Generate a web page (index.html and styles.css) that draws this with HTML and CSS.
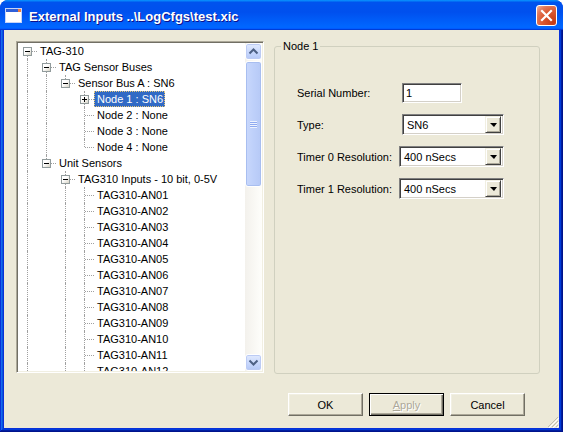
FILE: index.html
```html
<!DOCTYPE html>
<html lang="en">
<head>
    <meta charset="UTF-8">
    <title>External Inputs</title>
    <link rel="stylesheet" href="styles.css">
</head>
<body>
<div class="window">
    <div class="titlebar">
        <svg class="app-icon" width="17" height="15" viewBox="0 0 17 15">
            <rect x="0.5" y="0.5" width="16" height="14" fill="#fff" stroke="#c6d3f7"/>
            <rect x="1" y="1" width="15" height="3" fill="#2f5fd8"/>
            <rect x="13" y="1" width="3" height="3" fill="#f07a3a"/>
        </svg>
        <span class="title">External Inputs ..\LogCfgs\test.xic</span>
        <div class="close-btn">
            <svg width="13" height="13" viewBox="0 0 13 13">
                <path d="M2 2 L11 11 M11 2 L2 11" stroke="#fff" stroke-width="2.2" stroke-linecap="square"/>
            </svg>
        </div>
    </div>
    <div class="frame">
        <div class="client">
            <div class="panes">
                <div class="tree-box">
                    <div class="tree">
                        <div class="row"><span class="own first"><i class="exp"></i></span><span class="lbl">TAG-310</span></div>
                        <div class="row"><span class="ln"></span><span class="own"><i class="exp"></i></span><span class="lbl">TAG Sensor Buses</span></div>
                        <div class="row"><span class="ln"></span><span class="ln"></span><span class="own last"><i class="exp"></i></span><span class="lbl">Sensor Bus A : SN6</span></div>
                        <div class="row"><span class="ln"></span><span class="ln"></span><span class="gap"></span><span class="own"><i class="exp plus"></i></span><span class="lbl selected">Node 1 : SN6</span></div>
                        <div class="row"><span class="ln"></span><span class="ln"></span><span class="gap"></span><span class="own"></span><span class="lbl">Node 2 : None</span></div>
                        <div class="row"><span class="ln"></span><span class="ln"></span><span class="gap"></span><span class="own"></span><span class="lbl">Node 3 : None</span></div>
                        <div class="row"><span class="ln"></span><span class="ln"></span><span class="gap"></span><span class="own last"></span><span class="lbl">Node 4 : None</span></div>
                        <div class="row"><span class="ln"></span><span class="own last"><i class="exp"></i></span><span class="lbl">Unit Sensors</span></div>
                        <div class="row"><span class="ln"></span><span class="gap"></span><span class="own"><i class="exp"></i></span><span class="lbl">TAG310 Inputs - 10 bit, 0-5V</span></div>
                        <div class="row"><span class="ln"></span><span class="gap"></span><span class="ln"></span><span class="own"></span><span class="lbl">TAG310-AN01</span></div>
                        <div class="row"><span class="ln"></span><span class="gap"></span><span class="ln"></span><span class="own"></span><span class="lbl">TAG310-AN02</span></div>
                        <div class="row"><span class="ln"></span><span class="gap"></span><span class="ln"></span><span class="own"></span><span class="lbl">TAG310-AN03</span></div>
                        <div class="row"><span class="ln"></span><span class="gap"></span><span class="ln"></span><span class="own"></span><span class="lbl">TAG310-AN04</span></div>
                        <div class="row"><span class="ln"></span><span class="gap"></span><span class="ln"></span><span class="own"></span><span class="lbl">TAG310-AN05</span></div>
                        <div class="row"><span class="ln"></span><span class="gap"></span><span class="ln"></span><span class="own"></span><span class="lbl">TAG310-AN06</span></div>
                        <div class="row"><span class="ln"></span><span class="gap"></span><span class="ln"></span><span class="own"></span><span class="lbl">TAG310-AN07</span></div>
                        <div class="row"><span class="ln"></span><span class="gap"></span><span class="ln"></span><span class="own"></span><span class="lbl">TAG310-AN08</span></div>
                        <div class="row"><span class="ln"></span><span class="gap"></span><span class="ln"></span><span class="own"></span><span class="lbl">TAG310-AN09</span></div>
                        <div class="row"><span class="ln"></span><span class="gap"></span><span class="ln"></span><span class="own"></span><span class="lbl">TAG310-AN10</span></div>
                        <div class="row"><span class="ln"></span><span class="gap"></span><span class="ln"></span><span class="own"></span><span class="lbl">TAG310-AN11</span></div>
                        <div class="row"><span class="ln"></span><span class="gap"></span><span class="ln"></span><span class="own"></span><span class="lbl">TAG310-AN12</span></div>
                    </div>
                    <div class="vscroll">
                        <div class="sb-btn">
                            <svg width="15" height="15" viewBox="0 0 15 15"><path d="M3.5 9.5 L7.5 5.5 L11.5 9.5" fill="none" stroke="#4d6185" stroke-width="2"/></svg>
                        </div>
                        <div class="sb-thumb"><span class="grip-lines"></span></div>
                        <div class="sb-track"></div>
                        <div class="sb-btn">
                            <svg width="15" height="15" viewBox="0 0 15 15"><path d="M3.5 5.5 L7.5 9.5 L11.5 5.5" fill="none" stroke="#4d6185" stroke-width="2"/></svg>
                        </div>
                    </div>
                </div>
                <fieldset class="group">
                    <legend>Node 1</legend>
                    <div class="form">
                        <span>Serial Number:</span>
                        <div class="text-field shift">1</div>
                        <span>Type:</span>
                        <div class="combo shift narrow"><span class="value">SN6</span><span class="drop"></span></div>
                        <span>Timer 0 Resolution:</span>
                        <div class="combo"><span class="value">400 nSecs</span><span class="drop"></span></div>
                        <span>Timer 1 Resolution:</span>
                        <div class="combo"><span class="value">400 nSecs</span><span class="drop"></span></div>
                    </div>
                </fieldset>
            </div>
            <div class="buttons">
                <button class="btn">OK</button>
                <button class="btn default disabled"><u>A</u>pply</button>
                <button class="btn">Cancel</button>
            </div>
            <svg class="size-grip" width="12" height="12" viewBox="0 0 12 12">
                <path d="M11 1 L1 11 M11 5 L5 11 M11 9 L9 11" stroke="#c1bdb0" stroke-width="1"/>
                <path d="M12 2 L2 12 M12 6 L6 12 M12 10 L10 12" stroke="#fff" stroke-width="1"/>
            </svg>
        </div>
    </div>
</div>
</body>
</html>
```

FILE: styles.css
```css
html, body {
    margin: 0;
    background: #fff;
}
body {
    font: 11px "Liberation Sans", Arial, sans-serif;
    color: #000;
}

.window {
    width: 563px;
    height: 432px;
    display: flex;
    flex-direction: column;
    border-radius: 8px 8px 0 0;
    overflow: hidden;
    background: #0831d9;
}

/* title bar */
.titlebar {
    height: 30px;
    flex: none;
    display: flex;
    align-items: center;
    position: relative;
    background: linear-gradient(180deg, #0997ff, #0053ee 8%, #0050ee 40%, #0066ff 88%, #0066ff 93%, #005bff 95%, #003dd7 96%, #003dd7);
}
.app-icon {
    margin: 0 7px 0 5px;
    flex: none;
}
.title {
    color: #fff;
    font: bold 13px "Liberation Sans", Arial, sans-serif;
    text-shadow: 1px 1px #0f1089;
    padding-top: 2px;
}
.close-btn {
    position: absolute;
    right: 6px;
    top: 5px;
    width: 21px;
    height: 21px;
    box-sizing: border-box;
    border: 1px solid #fff;
    border-radius: 3px;
    display: flex;
    align-items: center;
    justify-content: center;
    background: radial-gradient(circle at 85% 85%, #c53a14 0%, #dc5a33 50%, #e2795a 75%, #f3b8a2 100%);
}

/* frame + client */
.frame {
    flex: 1;
    display: flex;
    padding: 0 4px 4px;
    box-shadow: inset -1px -1px #00138c, inset 1px 0 #0831d9, inset -2px -2px #001ea0, inset 2px 0 #166aee, inset -3px -3px #003bda, inset 3px 0 #0855dd;
}
.client {
    flex: 1;
    background: #ece9d8;
    position: relative;
    padding: 11px 0 0 12px;
}
.panes {
    display: flex;
    gap: 10px;
    align-items: flex-start;
}

/* tree */
.tree-box {
    width: 248px;
    height: 332px;
    box-sizing: border-box;
    display: flex;
    padding: 1px;
    background: #fff;
    border: 1px solid;
    border-color: #aca899 #fff #fff #aca899;
    box-shadow: inset 1px 1px #716f64, inset -1px -1px #f1efe2;
}
.tree {
    flex: 1;
    overflow: hidden;
}
.row {
    display: flex;
    height: 16px;
}
.ln, .gap, .own {
    width: 19px;
    height: 16px;
    flex: none;
    position: relative;
}
.ln::before, .own::before {
    content: "";
    position: absolute;
    left: 9px;
    top: 0;
    bottom: 0;
    border-left: 1px dotted #a0a0a0;
}
.own.first::before { top: 8px; }
.own.last::before { bottom: 8px; }
.own::after {
    content: "";
    position: absolute;
    left: 10px;
    right: 0;
    top: 8px;
    border-top: 1px dotted #a0a0a0;
}
.exp {
    position: absolute;
    left: 5px;
    top: 4px;
    width: 9px;
    height: 9px;
    box-sizing: border-box;
    border: 1px solid #919b9c;
    background: linear-gradient(135deg, #fff 40%, #d8d4c6);
    z-index: 1;
}
.exp::before {
    content: "";
    position: absolute;
    left: 1px;
    top: 3px;
    width: 5px;
    height: 1px;
    background: #000;
}
.exp.plus::after {
    content: "";
    position: absolute;
    left: 3px;
    top: 1px;
    width: 1px;
    height: 5px;
    background: #000;
}
.lbl {
    padding: 0 2px 0 3px;
    line-height: 16px;
    white-space: nowrap;
}
.lbl.selected {
    background: #316ac5;
    color: #fff;
    outline: 1px dotted #e8c878;
    outline-offset: -1px;
}

/* scrollbar */
.vscroll {
    width: 17px;
    flex: none;
    display: flex;
    flex-direction: column;
    background: linear-gradient(90deg, #f3f1ec, #fefefb);
}
.sb-btn {
    height: 17px;
    flex: none;
    box-sizing: border-box;
    border: 1px solid #fff;
    border-radius: 3px;
    display: flex;
    align-items: center;
    justify-content: center;
    background: linear-gradient(180deg, #e1eafe, #c6d6fc 60%, #b4c8f6);
    box-shadow: inset 0 0 0 1px #bccbf4;
}
.sb-thumb {
    height: 126px;
    flex: none;
    margin-top: 1px;
    box-sizing: border-box;
    border: 1px solid #fff;
    border-radius: 3px;
    display: flex;
    align-items: center;
    justify-content: center;
    background: linear-gradient(90deg, #c9d8fc, #bed0fa 50%, #b6c9f6);
    box-shadow: inset 0 0 0 1px #a8bef0;
}
.grip-lines {
    width: 7px;
    height: 7px;
    background: repeating-linear-gradient(180deg, #eef3fe 0 1px, #8faaf0 1px 2px);
}
.sb-track {
    flex: 1;
}

/* group box */
.group {
    width: 266px;
    height: 333px;
    box-sizing: border-box;
    margin: 0;
    padding: 0;
    border: 1px solid #d0d0bf;
    border-radius: 3px;
}
.group legend {
    margin-left: 6px;
    padding: 0 2px;
    line-height: 11px;
}
.form {
    display: grid;
    grid-template-columns: 102px auto;
    grid-auto-rows: 21px;
    row-gap: 11px;
    align-items: center;
    justify-content: start;
    padding: 30px 0 0 22px;
}
.text-field, .combo {
    box-sizing: border-box;
    background: #fff;
    border: 1px solid;
    border-color: #808080 #fff #fff #808080;
    box-shadow: inset 1px 1px #404040, inset -1px -1px #d4d0c8;
}
.text-field {
    width: 60px;
    height: 20px;
    padding: 0 3px;
    line-height: 18px;
}
.combo {
    width: 105px;
    height: 21px;
    display: flex;
    align-items: center;
    padding: 2px;
}
.combo.narrow { width: 102px; }
.shift { margin-left: 3px; }
.combo .value {
    flex: 1;
    padding-left: 2px;
}
.drop {
    width: 16px;
    height: 17px;
    box-sizing: border-box;
    display: flex;
    align-items: center;
    justify-content: center;
    background: #ece9d8;
    border: 1px solid;
    border-color: #f1efe2 #404040 #404040 #f1efe2;
    box-shadow: inset 1px 1px #fff, inset -1px -1px #aca899;
}
.drop::before {
    content: "";
    border-left: 4px solid transparent;
    border-right: 3px solid transparent;
    border-top: 4px solid #000;
    margin-top: 1px;
}

/* dialog buttons */
.buttons {
    display: flex;
    justify-content: flex-end;
    gap: 6px;
    margin-top: 19px;
    padding-right: 34px;
}
.btn {
    width: 75px;
    height: 23px;
    box-sizing: border-box;
    padding: 0;
    font: 11px "Liberation Sans", Arial, sans-serif;
    color: #000;
    background: #ece9d8;
    border: 1px solid;
    border-color: #fff #716f64 #716f64 #fff;
    box-shadow: inset -1px -1px #aca899, inset 1px 1px #f1efe2;
}
.btn.default {
    border-color: #000;
    box-shadow: inset 1px 1px #fff, inset -1px -1px #716f64, inset -2px -2px #aca899;
}
.btn.disabled {
    color: #aca899;
    text-shadow: 1px 1px #fff;
}

.size-grip {
    position: absolute;
    right: 0;
    bottom: 0;
}
```
